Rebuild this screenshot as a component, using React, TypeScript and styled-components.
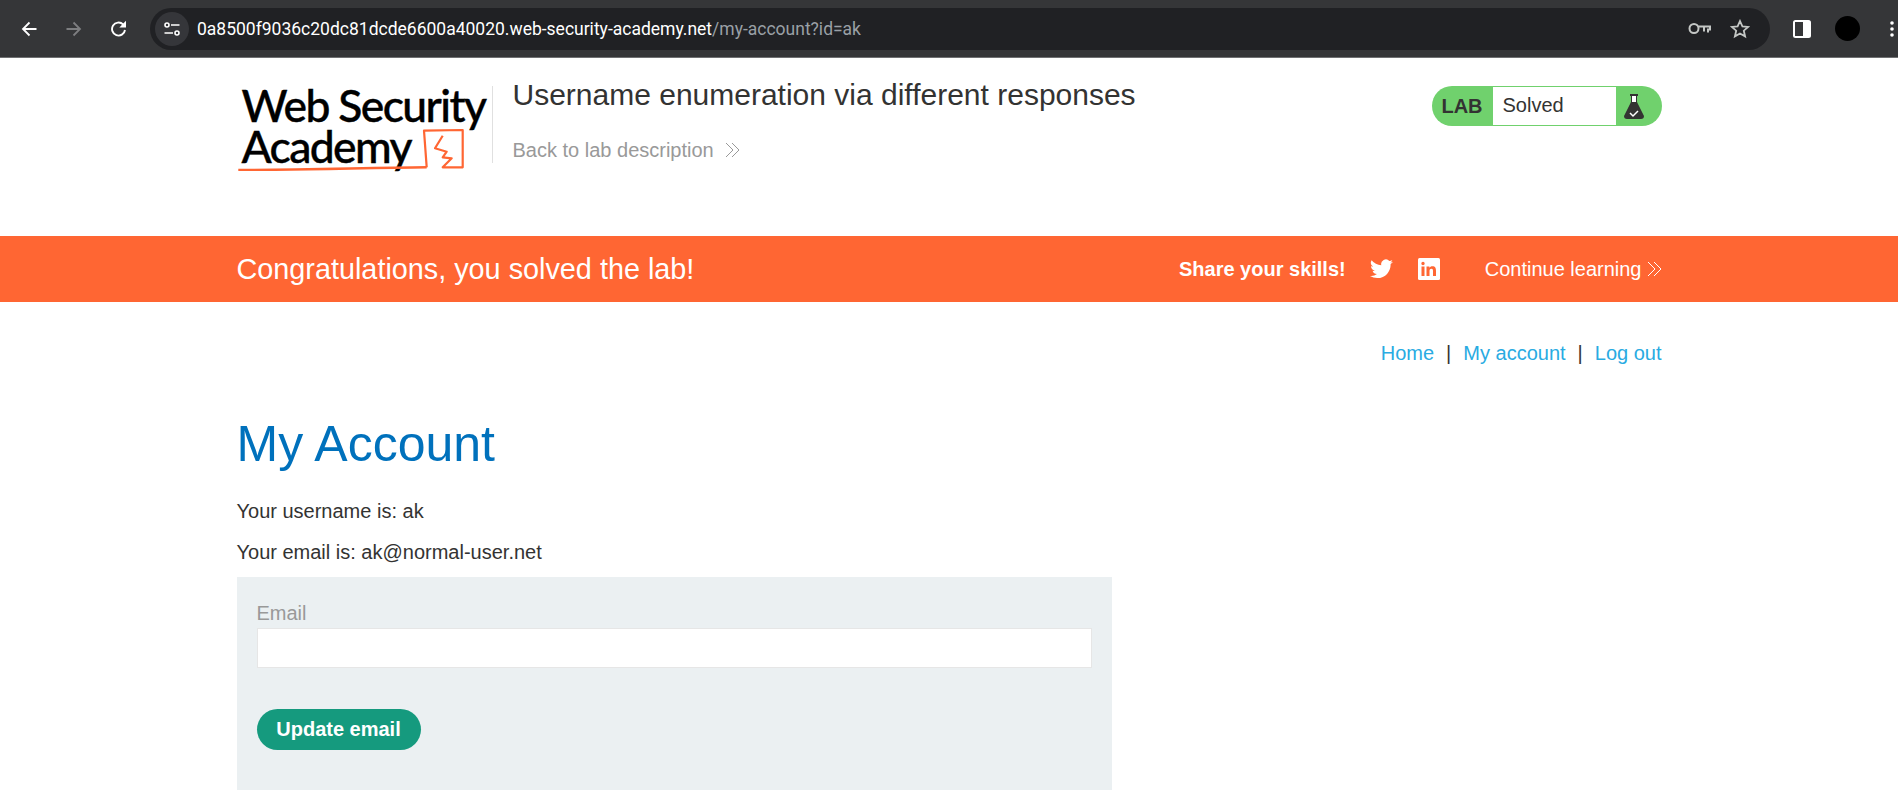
import { FC } from "react";
import styled, { createGlobalStyle } from "styled-components";

const GlobalStyle = createGlobalStyle`
  html, body {
    margin: 0;
    padding: 0;
    background: #fff;
    font-family: "Liberation Sans", Arial, sans-serif;
    color: #333332;
  }
  * { box-sizing: border-box; }
`;

const Page = styled.div`
  width: 100%;
  height: 808px;
  overflow: hidden;
  background: #fff;
`;

const BrowserBar = styled.div`
  height: 58px;
  background: #353638;
  border-bottom: 1px solid #6f7072;
  display: flex;
  align-items: center;
  padding: 0 0 0 15px;
`;

const NavButton = styled.div`
  width: 27px;
  height: 27px;
  margin-right: 18px;
  display: flex;
  align-items: center;
  justify-content: center;
`;

const Omnibox = styled.div`
  width: 1620px;
  height: 42px;
  background: #202124;
  border-radius: 21px;
  display: flex;
  align-items: center;
  padding: 0 20px 0 5px;
`;

const TuneBadge = styled.div`
  width: 34px;
  height: 34px;
  border-radius: 50%;
  background: #35363a;
  display: flex;
  align-items: center;
  justify-content: center;
  margin-right: 8px;
`;

const Url = styled.div`
  flex: 1;
  font-family: "Roboto", sans-serif;
  font-size: 17.5px;
  color: #fff;
  white-space: nowrap;
`;

const UrlPath = styled.span`
  color: #9aa0a6;
`;

const OmniIcons = styled.div`
  display: flex;
  align-items: center;
  gap: 19px;
`;

const BarRight = styled.div`
  display: flex;
  align-items: center;
  margin-left: 23px;
  gap: 24px;
`;

const Avatar = styled.div`
  width: 25px;
  height: 25px;
  border-radius: 50%;
  background: #000;
  margin-right: 6px;
`;

const Container = styled.div`
  width: 1425px;
  margin: 0 auto;
`;

const Header = styled.header`
  height: 178px;
  padding-top: 20px;
`;

const HeaderRow = styled(Container)`
  display: flex;
  align-items: flex-start;
`;

const Logo = styled.div`
  position: relative;
  width: 255px;
  height: 86px;
  margin-top: 6px;
  padding-left: 5px;
  flex-shrink: 0;
  font-family: "Lato", sans-serif;
  font-weight: 500;
  font-size: 44.4px;
  line-height: 41px;
  letter-spacing: -1.6px;
  -webkit-text-stroke: 0.4px #000;
  color: #000;
  white-space: nowrap;
`;

const LogoMark = styled.svg`
  position: absolute;
  left: 0;
  top: 1px;
`;

const Divider = styled.div`
  width: 1px;
  height: 77px;
  background: #e0e0e0;
  margin: 8px 20px 0 0;
`;

const TitleBlock = styled.div`
  flex: 1;
`;

const LabTitle = styled.h2`
  margin: 0;
  font-size: 30px;
  font-weight: 400;
  line-height: 33px;
  color: #333332;
`;

const BackLink = styled.a`
  display: flex;
  align-items: center;
  gap: 11px;
  margin-top: 28px;
  font-size: 20px;
  line-height: 22px;
  color: #999;
`;

const Status = styled.div`
  width: 230px;
  height: 40px;
  margin-top: 8px;
  background: #70d16d;
  border-radius: 20px;
  display: flex;
  align-items: center;
  flex-shrink: 0;
`;

const StatusLab = styled.div`
  width: 61px;
  text-align: center;
  font-size: 20px;
  font-weight: 700;
  color: #333332;
`;

const StatusText = styled.div`
  width: 123px;
  height: 38px;
  background: #fff;
  padding-left: 10px;
  font-size: 20px;
  line-height: 37px;
  color: #333332;
`;

const StatusIcon = styled.div`
  flex: 1;
  display: flex;
  justify-content: center;
  padding-right: 10px;
`;

const Banner = styled.section`
  height: 66px;
  background: #ff6633;
  color: #fff;
`;

const BannerRow = styled(Container)`
  height: 100%;
  display: flex;
  align-items: center;
`;

const BannerTitle = styled.h4`
  flex: 1;
  margin: 0;
  font-size: 28.8px;
  font-weight: 400;
`;

const Share = styled.span`
  font-size: 20px;
  font-weight: 700;
  margin-right: 24px;
`;

const SocialLink = styled.a`
  display: flex;
  margin-right: 25px;
`;

const Continue = styled.a`
  display: flex;
  align-items: center;
  gap: 5px;
  margin-left: 20px;
  font-size: 20px;
`;

const TopLinks = styled(Container)`
  display: flex;
  justify-content: flex-end;
  align-items: center;
  height: 22px;
  margin-top: 40px;
  font-size: 20px;
  color: #333332;
`;

const TopLink = styled.a`
  color: #29abe2;
`;

const Pipe = styled.span`
  margin: 0 12px;
`;

const Heading = styled.h1`
  margin: 50px 0 0;
  font-size: 50px;
  line-height: 60px;
  font-weight: 400;
  color: #0071bc;
`;

const InfoLine = styled.p`
  margin: 0;
  font-size: 20px;
  line-height: 22px;
  color: #333332;
`;

const InfoStack = styled.div`
  display: flex;
  flex-direction: column;
  gap: 19px;
  margin-top: 26px;
`;

const Form = styled.form`
  width: 875px;
  height: 213px;
  margin-top: 14px;
  padding: 25px 20px 0;
  background: #ebf0f2;
`;

const Label = styled.label`
  display: block;
  font-size: 20px;
  line-height: 22px;
  color: #999;
`;

const EmailInput = styled.input`
  display: block;
  width: 100%;
  height: 40px;
  margin-top: 4px;
  border: 1px solid #e6e6e6;
  background: #fff;
  outline: none;
`;

const SubmitButton = styled.button`
  display: block;
  height: 41px;
  width: 164px;
  margin-top: 41px;
  padding: 0;
  border: none;
  border-radius: 21px;
  background: #159a7e;
  color: #fff;
  font-family: "Liberation Sans", Arial, sans-serif;
  font-size: 20px;
  font-weight: 700;
`;

const Chevrons: FC<{ color: string }> = ({ color }) => (
  <svg width="15" height="16" viewBox="0 0 15 16" fill="none" stroke={color} strokeWidth="1">
    <path d="M1 1l7 7-7 7M7 1l7 7-7 7" />
  </svg>
);

const App: FC = () => {
  return (
    <Page>
      <GlobalStyle />
      <BrowserBar>
        <NavButton>
          <svg width="16" height="16" viewBox="0 0 16 16" fill="none" stroke="#fff" strokeWidth="1.800">
            <path d="M15.500 8H2M8.500 1.500L2 8l6.500 6.500" />
          </svg>
        </NavButton>
        <NavButton>
          <svg width="16" height="16" viewBox="0 0 16 16" fill="none" stroke="#7d7e80" strokeWidth="1.800">
            <path d="M.5 8H14M7.500 1.500L14 8l-6.500 6.500" />
          </svg>
        </NavButton>
        <NavButton>
          <svg width="17" height="17" viewBox="0 0 17 17" fill="none" stroke="#fff" strokeWidth="1.900">
            <path d="M15 10a6.500 6.500 0 1 1-1.900-5.600L15 6.300" />
            <path d="M16 .8v6.700H9.300z" fill="#fff" stroke="none" />
          </svg>
        </NavButton>
        <Omnibox>
          <TuneBadge>
            <svg width="16" height="14" viewBox="0 0 16 14" fill="none" stroke="#fff" strokeWidth="1.600">
              <circle cx="3" cy="3" r="2" />
              <path d="M7 3h8.500M.5 11H9" />
              <circle cx="13" cy="11" r="2" />
            </svg>
          </TuneBadge>
          <Url>
            0a8500f9036c20dc81dcde6600a40020.web-security-academy.net<UrlPath>/my-account?id=ak</UrlPath>
          </Url>
          <OmniIcons>
            <svg width="23" height="13" viewBox="0 0 23 13" fill="none" stroke="#c4c7c5" strokeWidth="2">
              <circle cx="6" cy="6.500" r="4.500" />
              <path d="M10.500 4.500h11.500v3h-2v3M16 4.500v5" />
            </svg>
            <svg width="20" height="20" viewBox="0 0 20 20" fill="none" stroke="#c4c7c5" strokeWidth="1.800">
              <path d="M10 2l2.400 5.300 5.700.6-4.300 3.800 1.300 5.700L10 14.500l-5.100 2.900 1.300-5.700L1.900 7.900l5.700-.6z" />
            </svg>
          </OmniIcons>
        </Omnibox>
        <BarRight>
          <svg width="18" height="18" viewBox="0 0 18 18">
            <rect x="0" y="0" width="18" height="18" rx="2.500" fill="#fff" />
            <rect x="2" y="2" width="8" height="14" fill="#353638" />
          </svg>
          <Avatar />
          <svg width="4" height="18" viewBox="0 0 4 18" fill="#fff">
            <circle cx="2" cy="3" r="1.800" />
            <circle cx="2" cy="9" r="1.800" />
            <circle cx="2" cy="15" r="1.800" />
          </svg>
        </BarRight>
      </BrowserBar>

      <Header>
        <HeaderRow>
          <Logo>
            <div>Web Security</div>
            <div>Academy</div>
            <LogoMark width="255" height="86" viewBox="0 0 255 86" fill="none" stroke="#ff6633">
              <path d="M1.300 85c60 0 125-2 188.400-2.700" strokeWidth="2.500" />
              <path
                d="M189.700 82.300L187 45.700l38.700-.7v37.300h-20l9-9-9-1 4-5.600-11.700-3.400 7.700-12.600"
                strokeWidth="2.200"
                strokeLinejoin="round"
              />
            </LogoMark>
          </Logo>
          <Divider />
          <TitleBlock>
            <LabTitle>Username enumeration via different responses</LabTitle>
            <BackLink>
              Back to lab description
              <Chevrons color="#999" />
            </BackLink>
          </TitleBlock>
          <Status>
            <StatusLab>LAB</StatusLab>
            <StatusText>Solved</StatusText>
            <StatusIcon>
              <svg width="20" height="26" viewBox="0 0 20 26">
                <path d="M6 1h8v2h-1v6l7 14q0 3-3 3H3q-3 0-3-3L7 9V3H6z" fill="#333332" />
                <rect x="8" y="3" width="4" height="6" fill="#fff" />
                <path d="M6 20l3 3 5-5" fill="none" stroke="#fff" strokeWidth="1.500" />
              </svg>
            </StatusIcon>
          </Status>
        </HeaderRow>
      </Header>

      <Banner>
        <BannerRow>
          <BannerTitle>Congratulations, you solved the lab!</BannerTitle>
          <Share>Share your skills!</Share>
          <SocialLink>
            <svg width="23" height="20" viewBox="0 0 24 20" fill="#fff">
              <path d="M24 2.400a9.800 9.800 0 0 1-2.800.8A4.900 4.900 0 0 0 23.300.5a9.800 9.800 0 0 1-3.100 1.200 4.900 4.900 0 0 0-8.400 4.500A14 14 0 0 1 1.700.9a4.900 4.900 0 0 0 1.500 6.600 4.900 4.900 0 0 1-2.200-.6c0 2.300 1.600 4.400 3.900 4.900a4.900 4.900 0 0 1-2.200.1 4.900 4.900 0 0 0 4.600 3.400A9.900 9.900 0 0 1 0 17.300 14 14 0 0 0 7.500 19.500c9.100 0 14.300-7.700 14-14.600A10 10 0 0 0 24 2.400z" />
            </svg>
          </SocialLink>
          <SocialLink>
            <svg width="22" height="22" viewBox="0 0 22 22">
              <rect width="22" height="22" rx="1.500" fill="#fff" />
              <path d="M3.500 8.500h3V18h-3zM5 3.800a1.700 1.700 0 1 1 0 3.400 1.700 1.700 0 0 1 0-3.400zM8.500 8.500h2.900v1.300c.5-.9 1.600-1.600 3-1.600 3 0 3.600 2 3.600 4.500V18h-3v-4.700c0-1.200 0-2.600-1.600-2.600s-1.900 1.200-1.900 2.500V18h-3z" fill="#ff6633" />
            </svg>
          </SocialLink>
          <Continue>
            Continue learning
            <Chevrons color="#fff" />
          </Continue>
        </BannerRow>
      </Banner>

      <TopLinks>
        <TopLink>Home</TopLink>
        <Pipe>|</Pipe>
        <TopLink>My account</TopLink>
        <Pipe>|</Pipe>
        <TopLink>Log out</TopLink>
      </TopLinks>

      <Container>
        <Heading>My Account</Heading>
        <InfoStack>
          <InfoLine>Your username is: ak</InfoLine>
          <InfoLine>Your email is: ak@normal-user.net</InfoLine>
        </InfoStack>
        <Form onSubmit={(e) => e.preventDefault()}>
          <Label>Email</Label>
          <EmailInput type="email" />
          <SubmitButton type="submit">Update email</SubmitButton>
        </Form>
      </Container>
    </Page>
  );
};

export default App;
